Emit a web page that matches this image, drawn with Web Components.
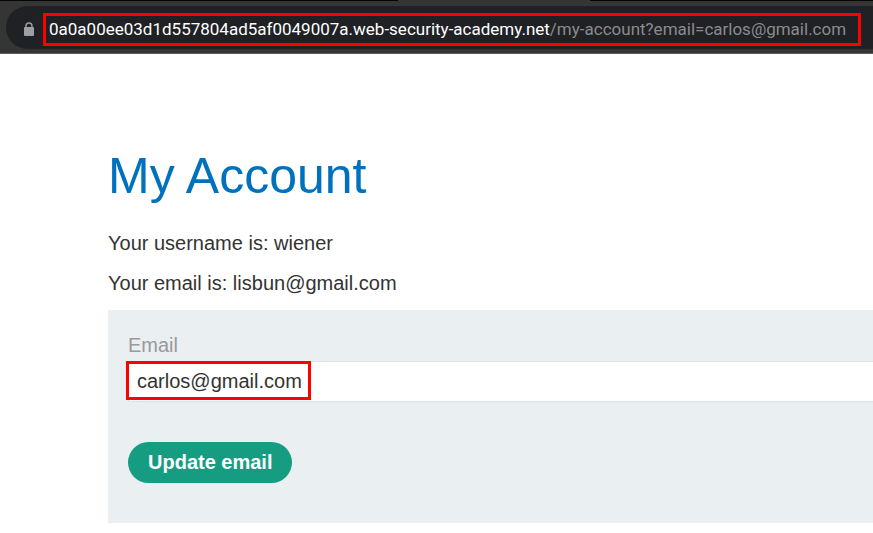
<!DOCTYPE html>
<html lang="en">
<head>
<meta charset="utf-8">
<title>My Account</title>
<style>
  html, body { margin: 0; }
  body {
    background: #fff;
    color: #333332;
    font: 20px/24px "Liberation Sans", Arial, sans-serif;
    overflow-x: hidden;
  }
</style>
</head>
<body>
<address-bar>
  <span slot="host">0a0a00ee03d1d557804ad5af0049007a.web-security-academy.net</span>
  <span slot="path">/my-account?email=carlos@gmail.com</span>
</address-bar>
<account-page>
  <span slot="title">My Account</span>
  <p>Your username is: wiener</p>
  <p>Your email is: lisbun@gmail.com</p>
  <email-form slot="form" value="carlos@gmail.com"></email-form>
</account-page>

<template id="address-bar">
  <style>
    :host {
      display: block;
      box-sizing: border-box;
      padding: 5px 0 4px 6px;
      background: #353535;
      border-top: 1px solid #050505;
      border-bottom: 1px solid #5c5c5c;
      position: relative;
    }
    .tab {
      position: absolute;
      top: -1px;
      left: 398px;
      width: 192px;
      height: 1px;
      background: #353535;
    }
    .pill {
      display: flex;
      align-items: center;
      gap: 8px;
      box-sizing: border-box;
      height: 43px;
      padding: 3px 0 0 17px;
      border-radius: 22px 0 0 22px;
      background: #202124;
    }
    svg { display: block; flex: none; }
    .url {
      box-sizing: border-box;
      flex: none;
      width: max-content;
      padding: 0 6px 0 3px;
      min-width: 818px;
      border: 3px solid #fe0000;
      font: 17px/27px Roboto, "Open Sans", sans-serif;
      white-space: nowrap;
      color: #fff;
    }
    .path { color: #8b8b8b; }
  </style>
  <div class="tab"></div>
  <div class="pill">
    <svg width="12" height="14" viewBox="0 0 12 14" aria-hidden="true">
      <path d="M3 6V4a3 3 0 0 1 6 0v2" fill="none" stroke="#9aa0a6" stroke-width="1.4"/>
      <rect x="1" y="5" width="10" height="9" rx="1" fill="#9aa0a6"/>
    </svg>
    <div class="url"><slot name="host"></slot><span class="path"><slot name="path"></slot></span></div>
  </div>
</template>

<template id="account-page">
  <style>
    :host { display: block; padding: 92px 0 10px 108px; }
    h1 {
      margin: 0 0 25px;
      color: #0071bd;
      font-size: 50px;
      font-weight: 400;
      line-height: 60px;
    }
    .body {
      display: grid;
      gap: 16px;
      margin-bottom: 15px;
    }
    ::slotted(p) { margin: 0; }
  </style>
  <h1><slot name="title"></slot></h1>
  <div class="body"><slot></slot></div>
  <slot name="form"></slot>
</template>

<template id="email-form">
  <style>
    :host { display: block; }
    form {
      padding: 20px 0 40px 20px;
      background: #eaeff2;
    }
    label {
      display: block;
      padding: 3px 0;
      color: #999;
    }
    .field { position: relative; margin: 1px 0 40px; }
    input {
      display: block;
      box-sizing: border-box;
      width: 100%;
      height: 41px;
      margin: 0;
      padding: 0 8px;
      border: 1px solid #e0e2e7;
      border-right: 0;
      border-radius: 0;
      background: #fff;
      color: #333332;
      font: inherit;
      outline: 0;
    }
    .mark {
      position: absolute;
      top: 0;
      left: -2px;
      box-sizing: border-box;
      width: 185px;
      height: 39px;
      border: 3px solid #fe0000;
      pointer-events: none;
    }
    button {
      display: block;
      height: 41px;
      padding: 0 20px 2px;
      border: 0;
      border-radius: 21px;
      background: #169c80;
      color: #fff;
      font: inherit;
      font-weight: 700;
      cursor: pointer;
    }
  </style>
  <form>
    <label for="email">Email</label>
    <div class="field">
      <input id="email" type="email" name="email">
      <div class="mark"></div>
    </div>
    <button type="button">Update email</button>
  </form>
</template>

<script>
  class TemplateElement extends HTMLElement {
    constructor() {
      super();
      const template = document.getElementById(this.localName);
      this.attachShadow({ mode: "open" }).append(template.content.cloneNode(true));
    }
  }
  customElements.define("address-bar", class extends TemplateElement {});
  customElements.define("account-page", class extends TemplateElement {});
  customElements.define("email-form", class extends TemplateElement {
    connectedCallback() {
      this.shadowRoot.querySelector("input").value = this.getAttribute("value") || "";
    }
  });
</script>
</body>
</html>
